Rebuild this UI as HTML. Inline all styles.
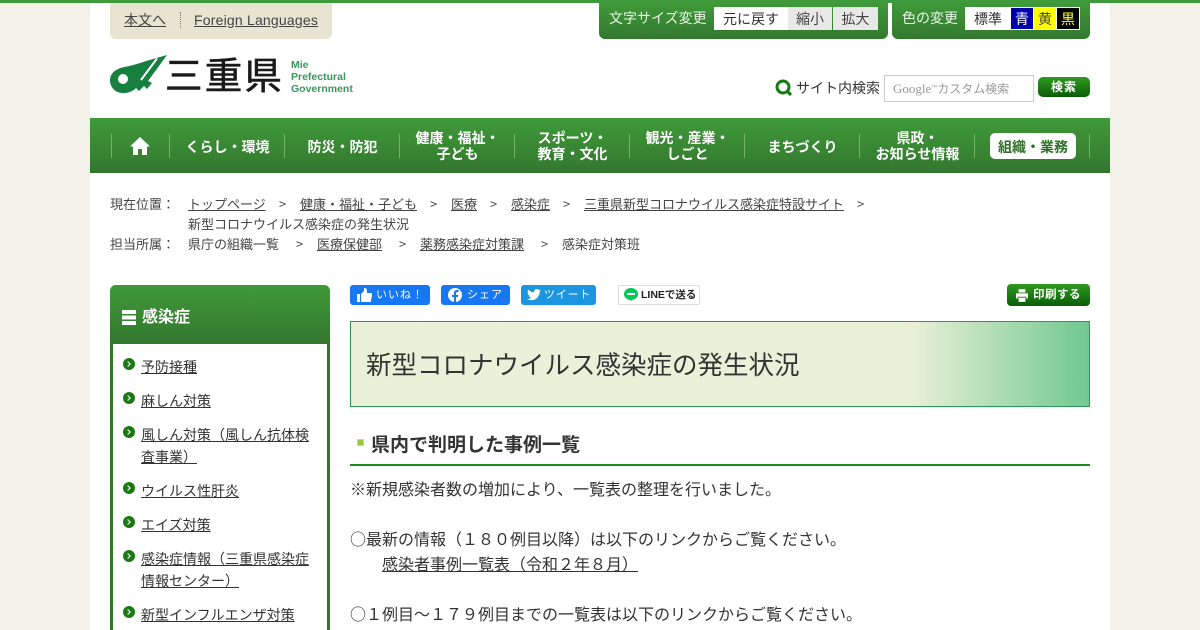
<!DOCTYPE html>
<html lang="ja"><head><meta charset="utf-8"><title>新型コロナウイルス感染症の発生状況</title>
<style>
html,body{margin:0;padding:0;width:1200px;height:630px;overflow:hidden;background:#f2f2e8;font-family:"Liberation Sans","Noto Sans CJK JP",sans-serif;color:#333}
#w{position:absolute;left:90px;top:0;width:1020px;height:630px;background:#fff}
#top{position:absolute;left:0;top:0;width:1200px;height:3px;background:#3e9a3a}
.a{position:absolute;white-space:nowrap}
a{color:inherit;text-decoration:underline}
.gb{background:linear-gradient(#3f9a39,#33772f)}
.nl{position:absolute;top:134px;width:1px;height:24px;background:#6fb565}
.n{position:absolute;top:130px;width:115px;text-align:center;color:#fff;font-size:14px;font-weight:bold;line-height:16px;white-space:nowrap}
.ip{font-family:"Noto Sans CJK JP",sans-serif}
.bc{font-size:13px;line-height:20px;color:#444;font-family:"Noto Sans CJK JP",sans-serif}
.sm{font-size:14px;line-height:22px;color:#333;font-family:"Noto Sans CJK JP",sans-serif}
.li{position:absolute;left:123px;width:12px;height:12px;border-radius:50%;background:#1a7a12}
.li:after{content:"";position:absolute;left:3px;top:3.500px;width:3px;height:3px;border-top:1.500px solid #fff;border-right:1.500px solid #fff;transform:rotate(45deg)}
.t{font-size:16px;line-height:24px;color:#333;position:absolute;left:350px;white-space:nowrap;font-family:"Noto Sans CJK JP",sans-serif}
</style></head><body>
<div id="w"></div><div id="top"></div>

<div class="a" style="left:110px;top:3px;width:222px;height:36px;background:#e8e4d2;border-radius:0 0 6px 6px"></div>
<a class="a" style="left:124px;top:12px;font-size:14px;line-height:17px;color:#444">本文へ</a>
<div class="a" style="left:180px;top:12px;height:16px;border-left:1px dotted #777"></div>
<a class="a" style="left:194px;top:12px;font-size:14px;line-height:17px;letter-spacing:.2px;color:#444">Foreign Languages</a>

<svg class="a" style="left:110px;top:55px" width="60" height="38" viewBox="0 0 60 38"><path fill="#17803f" d="M57 0 L36 6 C28 9 20 11 14 12 C5 14 0 19 0 25 C0 33 6 38 13 38 C19 38 23 36 26 33 L29 36 L34 31 L37 34 L42 28 L38 26 Z"/><circle cx="13" cy="24" r="5" fill="#fff"/><path d="M47 3.500 L31 25" stroke="#fff" stroke-width="2"/></svg>
<div class="a" style="left:165px;top:53px;font-size:37.500px;line-height:46px;letter-spacing:2.200px;color:#1a1a1a;-webkit-text-stroke:.6px #1a1a1a">三重県</div>
<div class="a" style="left:291px;top:59px;font-size:10.500px;line-height:12px;font-weight:bold;color:#3a9560">Mie<br>Prefectural<br>Government</div>

<div class="a gb" style="left:599px;top:3px;width:289px;height:36px;border-radius:0 0 6px 6px"></div>
<div class="a" style="left:609px;top:10px;font-size:14px;line-height:17px;color:#eaf5e6">文字サイズ変更</div>
<div class="a" style="left:714px;top:7px;width:74px;height:23px;background:#fff;text-align:center;font-size:14px;line-height:24px;color:#333">元に戻す</div>
<div class="a" style="left:788px;top:7px;width:44px;height:23px;background:#e8e8e8;text-align:center;font-size:14px;line-height:24px;color:#444">縮小</div>
<div class="a" style="left:833px;top:7px;width:45px;height:23px;background:#e8e8e8;text-align:center;font-size:14px;line-height:24px;color:#444">拡大</div>

<div class="a gb" style="left:892px;top:3px;width:198px;height:36px;border-radius:0 0 6px 6px"></div>
<div class="a" style="left:902px;top:10px;font-size:14px;line-height:17px;color:#eaf5e6">色の変更</div>
<div class="a" style="left:965px;top:7px;width:115px;height:23px;background:#fff"></div>
<div class="a" style="left:974px;top:7px;font-size:14px;line-height:24px;color:#333">標準</div>
<div class="a" style="left:1011px;top:8px;width:22px;height:21px;background:#0000a8;text-align:center;font-size:14px;line-height:22px;color:#fff">青</div>
<div class="a" style="left:1034px;top:8px;width:22px;height:21px;background:#ffff00;text-align:center;font-size:14px;line-height:22px;color:#444">黄</div>
<div class="a" style="left:1057px;top:8px;width:22px;height:21px;background:#000;text-align:center;font-size:14px;line-height:22px;color:#ffff33">黒</div>

<svg class="a" style="left:775px;top:79px" width="18" height="18" viewBox="0 0 18 18"><circle cx="8" cy="8" r="6" fill="none" stroke="#1a7a12" stroke-width="3"/><path d="M11.500 11.500 L16 16" stroke="#1a7a12" stroke-width="3.200"/></svg>
<div class="a" style="left:796px;top:79px;font-size:14px;line-height:18px;color:#333">サイト内検索</div>
<div class="a" style="left:884px;top:75px;width:148px;height:25px;border:1px solid #ccc;background:#fff;font-size:12px;line-height:25px;color:#999"><span style="margin-left:8px;font-family:'Liberation Serif',serif;font-size:13px">Google</span><span style="font-size:6px;vertical-align:4px">™</span>カスタム検索</div>
<div class="a" style="left:1038px;top:77px;width:52px;height:20px;border-radius:5px;background:linear-gradient(#2f9a20,#0c5c08);text-align:center;color:#fff;font-size:12px;font-weight:bold;line-height:20px;letter-spacing:1px">検索</div>

<div class="a gb" style="left:90px;top:118px;width:1020px;height:55px"></div>
<div class="nl" style="left:111px"></div><div class="nl" style="left:169px"></div><div class="nl" style="left:284px"></div><div class="nl" style="left:399px"></div><div class="nl" style="left:514px"></div><div class="nl" style="left:629px"></div><div class="nl" style="left:744px"></div><div class="nl" style="left:859px"></div><div class="nl" style="left:974px"></div><div class="nl" style="left:1089px"></div>
<svg class="a" style="left:130px;top:137px" width="20" height="18" viewBox="0 0 20 18"><path fill="#fff" d="M10 0 L20 9.500 L17 9.500 L17 18 L12 18 L12 12 L8 12 L8 18 L3 18 L3 9.500 L0 9.500 Z"/></svg>
<div class="n" style="left:170px;top:139px">くらし・環境</div>
<div class="n" style="left:285px;top:139px">防災・防犯</div>
<div class="n" style="left:400px">健康・福祉・<br>子ども</div>
<div class="n" style="left:515px">スポーツ・<br>教育・文化</div>
<div class="n" style="left:630px">観光・産業・<br>しごと</div>
<div class="n" style="left:745px;top:139px">まちづくり</div>
<div class="n" style="left:860px">県政・<br>お知らせ情報</div>
<div class="a" style="left:990px;top:133px;width:86px;height:26px;background:#fff;border-radius:5px;text-align:center;font-size:14px;font-weight:bold;line-height:28px;color:#2f6f2a">組織・業務</div>

<div class="a bc" style="left:110px;top:194px">現在位置：</div>
<div class="a bc" style="left:188px;top:194px"><a>トップページ</a></div><div class="a bc" style="left:279px;top:194px">&gt;</div>
<div class="a bc" style="left:300px;top:194px"><a>健康・福祉・子ども</a></div><div class="a bc" style="left:430px;top:194px">&gt;</div>
<div class="a bc" style="left:451px;top:194px"><a>医療</a></div><div class="a bc" style="left:490px;top:194px">&gt;</div>
<div class="a bc" style="left:511px;top:194px"><a>感染症</a></div><div class="a bc" style="left:563px;top:194px">&gt;</div>
<div class="a bc" style="left:584px;top:194px"><a>三重県新型コロナウイルス感染症特設サイト</a></div><div class="a bc" style="left:857px;top:194px">&gt;</div>
<div class="a bc" style="left:188px;top:214px">新型コロナウイルス感染症の発生状況</div>
<div class="a bc" style="left:110px;top:234px">担当所属：</div>
<div class="a bc" style="left:188px;top:234px">県庁の組織一覧</div><div class="a bc" style="left:296px;top:234px">&gt;</div>
<div class="a bc" style="left:317px;top:234px"><a>医療保健部</a></div><div class="a bc" style="left:399px;top:234px">&gt;</div>
<div class="a bc" style="left:420px;top:234px"><a>薬務感染症対策課</a></div><div class="a bc" style="left:541px;top:234px">&gt;</div>
<div class="a bc" style="left:562px;top:234px">感染症対策班</div>

<div class="a" style="left:110px;top:285px;width:220px;height:345px;border-radius:6px 6px 0 0;background:#33772f"></div>
<div class="a gb" style="left:110px;top:285px;width:220px;height:59px;border-radius:6px 6px 0 0"></div>
<div class="a" style="left:113px;top:344px;width:214px;height:286px;background:#fff"></div>
<div class="a" style="left:122px;top:310px;width:14px;height:3.500px;background:#fff;box-shadow:0 5.500px 0 #fff,0 11px 0 #fff"></div>
<div class="a ip" style="left:142px;top:305px;font-size:16px;font-weight:bold;line-height:20px;color:#fff">感染症</div>
<div class="li" style="top:358px"></div><a class="a sm" style="left:141px;top:356px">予防接種</a>
<div class="li" style="top:392px"></div><a class="a sm" style="left:141px;top:390px">麻しん対策</a>
<div class="li" style="top:426px"></div><div class="a sm" style="left:141px;top:424px;"><a>風しん対策（風しん抗体検<br>査事業）</a></div>
<div class="li" style="top:482px"></div><a class="a sm" style="left:141px;top:480px">ウイルス性肝炎</a>
<div class="li" style="top:516px"></div><a class="a sm" style="left:141px;top:514px">エイズ対策</a>
<div class="li" style="top:550px"></div><div class="a sm" style="left:141px;top:548px"><a>感染症情報（三重県感染症<br>情報センター）</a></div>
<div class="li" style="top:606px"></div><a class="a sm" style="left:141px;top:604px">新型インフルエンザ対策</a>

<div class="a" style="left:350px;top:285px;width:80px;height:20px;background:#1877f2;border-radius:3px;color:#fff;font-size:11px;line-height:21px;text-indent:26px;letter-spacing:1px">いいね！</div>
<svg class="a" style="left:357px;top:288px" width="15" height="14" viewBox="0 0 15 14"><path fill="#fff" d="M0 6h3v8H0zM4 6l3-3V0c2 0 3 1 3 3v2h4c1 0 1 1 1 2l-1 6c0 1-1 1-2 1H4z"/></svg>
<div class="a" style="left:441px;top:285px;width:69px;height:20px;background:#1877f2;border-radius:3px;color:#fff;font-size:11px;line-height:21px;text-indent:26px;letter-spacing:1px">シェア</div>
<svg class="a" style="left:448px;top:288px" width="14" height="14" viewBox="0 0 14 14"><circle cx="7" cy="7" r="7" fill="#fff"/><path fill="#1877f2" d="M6 14V9H4V7h2V5c0-2 1-3 3-3h1.500v2H9.500C8.500 4 8 4.500 8 5.300V7h2.400l-.4 2H8v5z"/></svg>
<div class="a" style="left:521px;top:285px;width:75px;height:20px;background:#1d94e0;border-radius:3px;color:#fff;font-size:11px;line-height:21px;text-indent:23px;letter-spacing:.8px">ツイート</div>
<svg class="a" style="left:527px;top:289px" width="14" height="12" viewBox="0 0 14 12"><path fill="#fff" d="M14 1.500c-.5.200-1 .4-1.600.4.600-.3 1-.9 1.200-1.500-.5.300-1.100.6-1.800.7C11.300.2 10.600 0 9.800 0 8.300 0 7 1.300 7 2.800c0 .2 0 .4.100.6C4.700 3.300 2.600 2.200 1.100.5.800 1 .7 1.500.7 2c0 1 .5 1.800 1.300 2.400-.5 0-.9-.1-1.300-.4 0 1.400 1 2.500 2.300 2.800-.4.100-.9.100-1.300 0 .4 1.100 1.400 1.900 2.700 2-1.200.9-2.800 1.400-4.400 1.200C1.300 10.700 2.800 11.200 4.400 11.200c5.300 0 8.200-4.400 8.200-8.200v-.4c.6-.4 1-.9 1.400-1.100z"/></svg>
<div class="a" style="left:618px;top:285px;width:80px;height:18px;border:1px solid #ddd;border-radius:2px;background:#fff;color:#222;font-size:10.500px;font-weight:bold;line-height:19px;text-indent:22px">LINEで送る</div>
<svg class="a" style="left:624px;top:288px" width="14" height="13" viewBox="0 0 14 13"><ellipse cx="7" cy="6" rx="7" ry="6" fill="#06c755"/><path d="M5 11l2 2 2-2z" fill="#06c755"/><rect x="3" y="5" width="8" height="2" fill="#fff"/></svg>

<div class="a" style="left:1007px;top:284px;width:83px;height:22px;border-radius:4px;background:linear-gradient(#2f9a20,#0c5c08);color:#fff;font-size:11.500px;font-weight:bold;line-height:23px;text-indent:26px;letter-spacing:.5px">印刷する</div>
<svg class="a" style="left:1016px;top:289px" width="12" height="13" viewBox="0 0 14 15"><path fill="#fff" d="M3 0h8v4H3zM0 5h14v6h-2V9H2v2H0zM3 10h8v5H3z"/></svg>

<div class="a" style="left:350px;top:321px;width:738px;height:84px;border:1px solid #2a9a5c;background:linear-gradient(90deg,#ebf0d8 0,#ebf0d8 76%,#6fc88f 100%)"></div>
<div class="a ip" style="left:366px;top:347px;font-size:25.500px;line-height:34px;color:#333">新型コロナウイルス感染症の発生状況</div>

<div class="a" style="left:357px;top:439px;width:7px;height:7px;background:#9ac83c;box-shadow:inset 0 0 0 1px #c4dd88"></div>
<div class="a ip" style="left:371px;top:430px;font-size:19px;font-weight:bold;line-height:28px;color:#333">県内で判明した事例一覧</div>
<div class="a" style="left:350px;top:464px;width:740px;height:2px;background:#1a8a1a"></div>

<div class="t" style="top:476px">※新規感染者数の増加により、一覧表の整理を行いました。</div>
<div class="t" style="top:526px">○最新の情報（１８０例目以降）は以下のリンクからご覧ください。</div>
<div class="t" style="left:382px;top:551px"><a>感染者事例一覧表（令和２年８月）</a></div>
<div class="t" style="top:601px">○１例目～１７９例目までの一覧表は以下のリンクからご覧ください。</div>
</body></html>
